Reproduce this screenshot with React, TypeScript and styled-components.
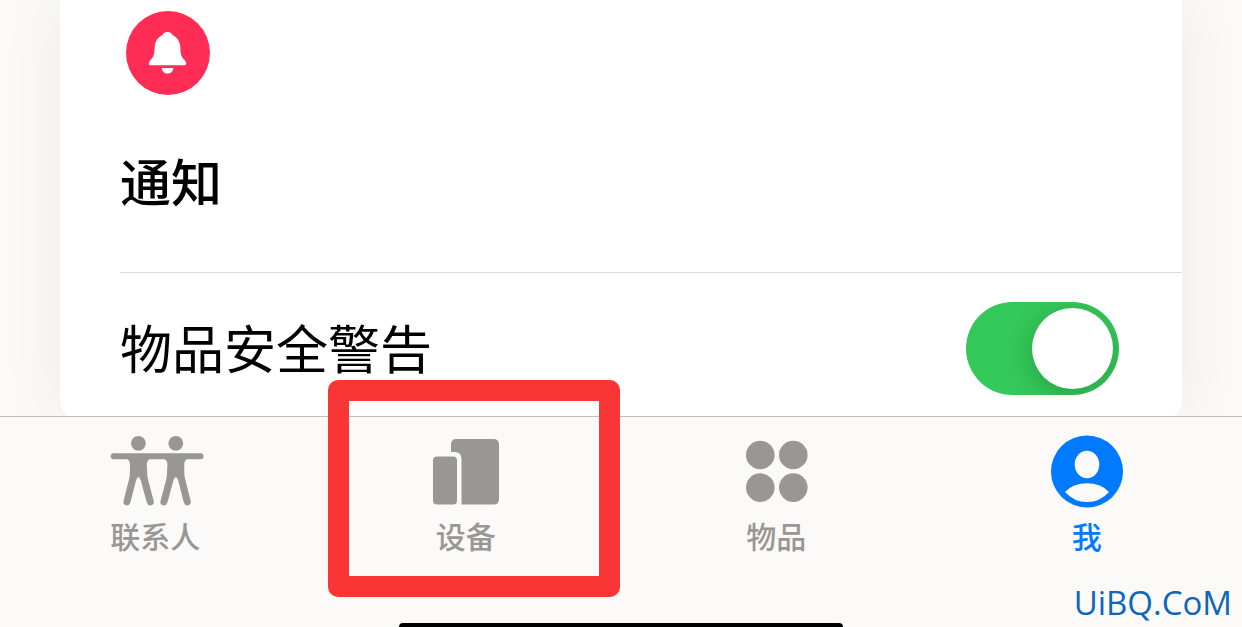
import React, { useState } from "react";
import styled, { createGlobalStyle } from "styled-components";

const GlobalStyle = createGlobalStyle`
  *, *::before, *::after { box-sizing: border-box; }
  body {
    margin: 0;
    background: #fbfaf8;
    font-family: "Noto Sans CJK SC", "Noto Sans", sans-serif;
  }
`;

const Page = styled.div`
  display: flex;
  flex-direction: column;
  min-height: 100vh;
  overflow: hidden;
`;

const Content = styled.main`
  padding: 0 60px;
  overflow: hidden;
`;

const Card = styled.section`
  margin-bottom: -4px;
  padding: 11px 0 0 60px;
  background: #ffffff;
  border-radius: 0 0 20px 20px;
  box-shadow: 0 0 60px rgba(60, 55, 50, 0.08);
`;

const CardHeader = styled.header`
  display: flex;
  flex-direction: column;
  gap: 45px;
  padding-bottom: 52px;
  border-bottom: 1px solid #dcdcdd;
`;

const BellBadge = styled.svg`
  display: block;
  width: 84px;
  height: 84px;
  margin-left: 6px;
`;

const Title = styled.h2`
  margin: 0;
  font-size: 51px;
  line-height: 80px;
  font-weight: 500;
  color: #000000;
`;

const SettingRow = styled.label`
  display: flex;
  align-items: flex-start;
  justify-content: space-between;
  height: 147px;
  padding: 29px 63px 0 0;
  font-size: 52px;
  line-height: 90px;
  color: #000000;
`;

const Switch = styled.input`
  appearance: none;
  display: flex;
  align-items: center;
  flex: none;
  width: 153px;
  height: 93px;
  margin: 0;
  padding: 6px;
  border-radius: 47px;
  background: #d8d8dc;
  overflow: hidden;
  cursor: pointer;

  &::before {
    content: "";
    width: 81px;
    height: 81px;
    border-radius: 50%;
    background: #ffffff;
    box-shadow: 0 6px 24px rgba(0, 0, 0, 0.2);
  }

  &:checked {
    justify-content: flex-end;
    background: #34c759;
  }
`;

const TabBar = styled.footer`
  position: relative;
  display: flex;
  flex: 1;
  flex-direction: column;
  align-items: center;
  border-top: 1px solid #bebdbc;
  background: #fbfaf8;
`;

const Tabs = styled.nav`
  display: grid;
  grid-template-columns: repeat(4, 1fr);
  width: 100%;
`;

const Tab = styled.button<{ $active: boolean }>`
  position: relative;
  display: flex;
  flex-direction: column;
  align-items: center;
  gap: 4px;
  height: 160px;
  padding: 18px 0 0;
  border: 0;
  background: transparent;
  color: ${(p) => (p.$active ? "#007aff" : "#999794")};
  font: inherit;
  font-size: 30px;
  line-height: 44px;
  font-weight: 500;
  cursor: pointer;
`;

const TabIcon = styled.svg`
  display: block;
  width: 94px;
  height: 74px;
  fill: currentColor;
  overflow: visible;
`;

const Highlight = styled.span`
  position: absolute;
  top: -37px;
  right: 1px;
  bottom: -20px;
  left: 17px;
  border: 21px solid #f93535;
  border-radius: 10px;
  pointer-events: none;
`;

const Watermark = styled.span`
  position: absolute;
  right: 10px;
  bottom: 4px;
  font-family: "Open Sans", "Noto Sans", sans-serif;
  font-size: 33px;
  line-height: 40px;
  font-weight: 500;
  color: #0f66b8;
`;

const HomeIndicator = styled.div`
  width: 444px;
  height: 4px;
  margin-top: auto;
  border-radius: 6px 6px 0 0;
  background: #000000;
`;

const PeopleIcon = () => (
  <TabIcon viewBox="0 0 94 74" aria-hidden="true">
    <circle cx="30.400" cy="8.300" r="7.400" />
    <circle cx="67.800" cy="8.300" r="7.400" />
    <rect x="2.700" y="18.300" width="92.800" height="5.900" rx="2.950" />
    <path d="M17 23H43.800Q39 24.500 38.800 29L39.300 40Q39.400 42 40 44.500L45.700 66Q46.400 69.300 43.300 70.300Q40 71 38.800 67.600L32.800 45.500Q31.800 42 30.400 42Q29 42 28 45.500L22.400 67.600Q21.200 71 18 70.300Q14.900 69.300 15.500 66L21 44.500Q21.600 42 21.800 40L22 29Q21.800 24.500 17 23Z" />
    <path d="M54.400 23H81.200Q76.400 24.500 76.200 29L76.400 40Q76.600 42 77.200 44.500L82.700 66Q83.300 69.300 80.200 70.300Q77 71 75.800 67.600L70.200 45.500Q69.200 42 67.800 42Q66.400 42 65.400 45.500L59.400 67.600Q58.200 71 54.900 70.300Q51.800 69.300 52.500 66L58.200 44.500Q58.800 42 58.900 40L59.400 29Q59.200 24.500 54.400 23Z" />
  </TabIcon>
);

const DevicesIcon = () => (
  <TabIcon viewBox="0 0 94 74" aria-hidden="true">
    <rect x="14" y="21.500" width="24" height="48" rx="4" />
    <path d="M32 17V9.500Q32 4 37.500 4H74.500Q80 4 80 9.500V64Q80 69.500 74.500 69.500H42.500V24Q42.500 17 35.500 17Z" />
  </TabIcon>
);

const ItemsIcon = () => (
  <TabIcon viewBox="0 0 94 74" aria-hidden="true">
    <circle cx="31.300" cy="20" r="14.300" />
    <circle cx="64.300" cy="20" r="14.300" />
    <circle cx="31.300" cy="52.600" r="14.300" />
    <circle cx="64.300" cy="52.600" r="14.300" />
  </TabIcon>
);

const MeIcon = () => (
  <TabIcon viewBox="0 0 94 74" aria-hidden="true">
    <circle cx="47" cy="36.500" r="36" />
    <ellipse cx="47" cy="29.500" rx="12.300" ry="13.700" fill="#fbfaf8" />
    <path d="M25 57Q33 48.300 47 48.300Q61 48.300 69 57Q60 67 47 67Q34 67 25 57Z" fill="#fbfaf8" />
  </TabIcon>
);

const tabs = [
  { id: "people", label: "联系人", Icon: PeopleIcon },
  { id: "devices", label: "设备", Icon: DevicesIcon, highlighted: true },
  { id: "items", label: "物品", Icon: ItemsIcon },
  { id: "me", label: "我", Icon: MeIcon },
];

export default function App() {
  const [active, setActive] = useState("me");
  const [alerts, setAlerts] = useState(true);

  return (
    <>
      <GlobalStyle />
      <Page>
        <Content>
          <Card>
            <CardHeader>
              <BellBadge viewBox="0 0 84 84" aria-hidden="true">
                <circle cx="42" cy="42" r="42" fill="#ff2d55" />
                <path
                  fill="#ffffff"
                  d="M41.500 21C44 21 45.600 22 46.600 24.200C51 26 54 30 54.300 36C54.500 41 54.700 45 57.500 48C59.500 50 60.200 51 60.200 52.400C60.200 53.600 59.300 54.300 57.800 54.300H25.200C23.700 54.300 22.800 53.600 22.800 52.400C22.800 51 23.500 50 25.500 48C28.300 45 28.500 41 28.700 36C29 30 32 26 36.400 24.200C37.400 22 39 21 41.500 21ZM35.800 56.900H47.400C47 60.400 45 62.500 41.600 62.500C38.200 62.500 36.200 60.400 35.800 56.900Z"
                />
              </BellBadge>
              <Title>通知</Title>
            </CardHeader>
            <SettingRow>
              物品安全警告
              <Switch
                type="checkbox"
                role="switch"
                checked={alerts}
                onChange={(e) => setAlerts(e.target.checked)}
              />
            </SettingRow>
          </Card>
        </Content>
        <TabBar>
          <Tabs>
            {tabs.map(({ id, label, Icon, highlighted }) => (
              <Tab
                key={id}
                type="button"
                $active={id === active}
                aria-current={id === active ? "page" : undefined}
                onClick={() => setActive(id)}
              >
                <Icon />
                {label}
                {highlighted && <Highlight />}
              </Tab>
            ))}
          </Tabs>
          <HomeIndicator />
          <Watermark>UiBQ.CoM</Watermark>
        </TabBar>
      </Page>
    </>
  );
}
